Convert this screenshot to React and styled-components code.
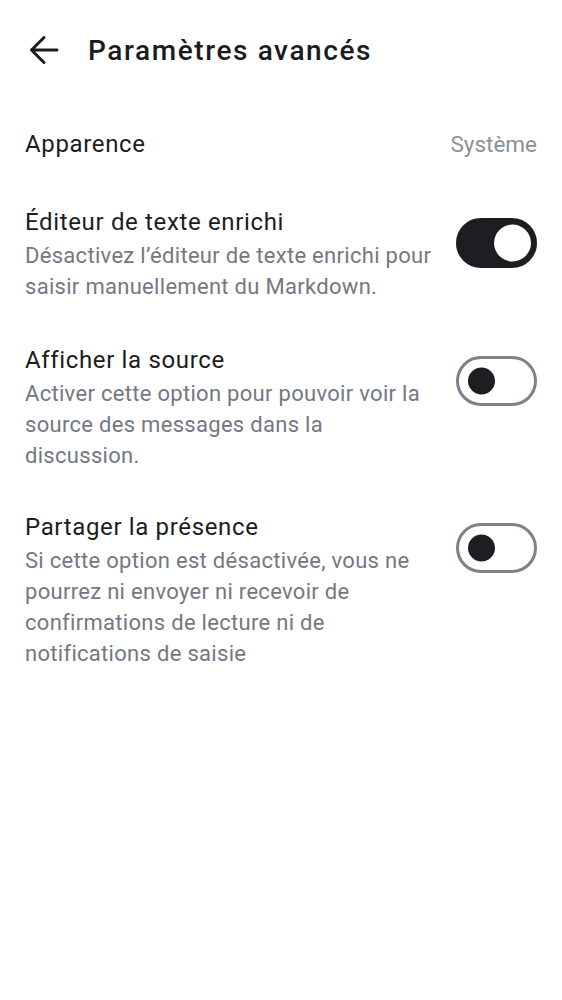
import React, { useState } from "react";
import styled, { createGlobalStyle } from "styled-components";

const GlobalStyle = createGlobalStyle`
  html, body {
    margin: 0;
    padding: 0;
    background: #ffffff;
  }
  body {
    font-family: Roboto, "Noto Sans", sans-serif;
    color: #1b1c20;
  }
`;

const Page = styled.div`
  width: 562px;
  min-height: 1000px;
  background: #fff;
`;

const Header = styled.header`
  display: flex;
  align-items: center;
  height: 100px;
  padding: 0 0 0 24px;
  box-sizing: border-box;
`;

const BackButton = styled.button`
  display: flex;
  align-items: center;
  justify-content: center;
  width: 40px;
  height: 40px;
  padding: 0;
  margin-right: 24px;
  border: none;
  background: none;
  color: #1b1c20;
  cursor: pointer;
`;

const Title = styled.h1`
  margin: 0;
  font-size: 28px;
  font-weight: 500;
  letter-spacing: 1.6px;
  color: #1b1c20;
`;

const List = styled.div`
  display: flex;
  flex-direction: column;
  padding: 0 25px;
`;

const Row = styled.div`
  display: flex;
  align-items: ${p => (p.$center ? "center" : "flex-start")};
  justify-content: space-between;
  gap: 20px;
  padding: ${p => p.$pad || "0"};
`;

const Texts = styled.div`
  display: flex;
  flex-direction: column;
  flex: 1;
`;

const Label = styled.div`
  font-size: 24px;
  line-height: 36px;
  letter-spacing: 0.65px;
  color: #1b1c20;
`;

const Desc = styled.div`
  font-size: 22px;
  line-height: 31px;
  color: #737883;
  letter-spacing: 0.3px;
`;

const Value = styled.div`
  font-size: 22.5px;
  color: #8b919b;
`;

const Track = styled.button`
  position: relative;
  flex: none;
  width: 81px;
  height: 50px;
  margin-top: 14px;
  padding: 0;
  border-radius: 25px;
  box-sizing: border-box;
  cursor: pointer;
  background: ${p => (p.$on ? "#1d1e22" : "#ffffff")};
  border: 3px solid ${p => (p.$on ? "#1d1e22" : "#7c828b")};
`;

const Knob = styled.span`
  position: absolute;
  top: 50%;
  transform: translateY(-50%);
  border-radius: 50%;
  width: ${p => (p.$on ? "37px" : "27px")};
  height: ${p => (p.$on ? "37px" : "27px")};
  left: ${p => (p.$on ? "35px" : "9px")};
  background: ${p => (p.$on ? "#ffffff" : "#1d1e22")};
`;

function Toggle({ on, onClick }) {
  return (
    <Track $on={on} onClick={onClick} aria-pressed={on}>
      <Knob $on={on} />
    </Track>
  );
}

const items = [
  {
    key: "rich",
    label: "Éditeur de texte enrichi",
    desc: "Désactivez l’éditeur de texte enrichi pour saisir manuellement du Markdown.",
    on: true,
    pad: "42px 0 0",
  },
  {
    key: "source",
    label: "Afficher la source",
    desc: "Activer cette option pour pouvoir voir la source des messages dans la discussion.",
    on: false,
    pad: "40px 0 0",
  },
  {
    key: "presence",
    label: "Partager la présence",
    desc: "Si cette option est désactivée, vous ne pourrez ni envoyer ni recevoir de confirmations de lecture ni de notifications de saisie",
    on: false,
    pad: "38px 0 0",
  },
];

export default function App() {
  const [state, setState] = useState(
    Object.fromEntries(items.map(i => [i.key, i.on]))
  );

  return (
    <Page>
      <GlobalStyle />
      <Header>
        <BackButton aria-label="Retour">
          <svg width="32" height="32" viewBox="0 0 32 32" fill="none">
            <path
              d="M29 16H4M16 3.5 3.5 16 16 28.5"
              stroke="currentColor"
              strokeWidth="3"
              strokeLinecap="round"
              strokeLinejoin="round"
            />
          </svg>
        </BackButton>
        <Title>Paramètres avancés</Title>
      </Header>
      <List>
        <Row $center $pad="26px 0 0">
          <Label>Apparence</Label>
          <Value>Système</Value>
        </Row>
        {items.map(it => (
          <Row key={it.key} $pad={it.pad}>
            <Texts>
              <Label>{it.label}</Label>
              <Desc>{it.desc}</Desc>
            </Texts>
            <Toggle
              on={state[it.key]}
              onClick={() => setState(s => ({ ...s, [it.key]: !s[it.key] }))}
            />
          </Row>
        ))}
      </List>
    </Page>
  );
}
